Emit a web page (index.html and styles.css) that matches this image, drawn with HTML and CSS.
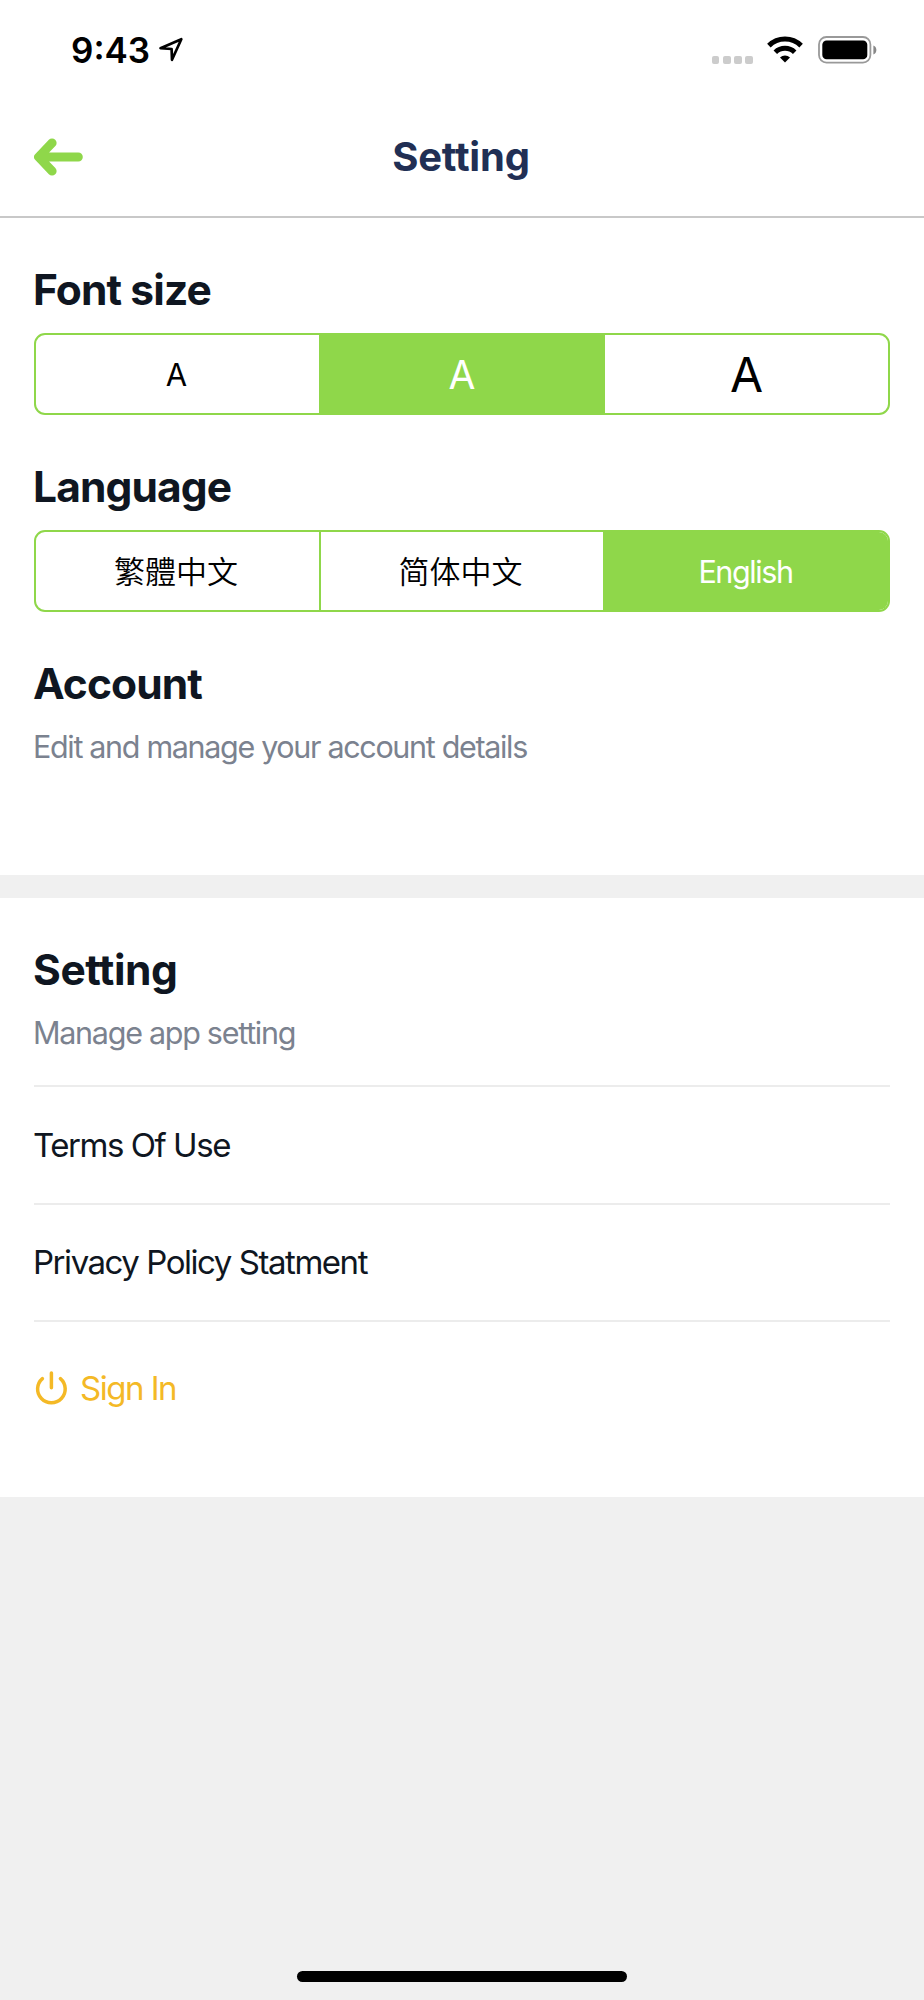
FILE: index.html
```html
<!DOCTYPE html>
<html lang="en">
<head>
<meta charset="utf-8">
<title>Setting</title>
<link rel="stylesheet" href="styles.css">
</head>
<body>
<div class="screen">
  <div class="status-bar">
    <div class="status-left">
      <span class="clock">9:43</span>
      <svg class="location" width="26" height="26" viewBox="0 0 26 26"><path d="M2.5 11.2 23.3 2.2 14 22.8 13.6 12Z" fill="none" stroke="#000" stroke-width="2.7" stroke-linejoin="round"/></svg>
    </div>
    <div class="status-right">
      <div class="cell-dots"><i></i><i></i><i></i><i></i></div>
      <svg class="wifi" width="36" height="27" viewBox="0 0 36 27">
        <path d="M1.9 9.6a23 23 0 0 1 32.2 0M8.3 16.2a14 14 0 0 1 19.4 0" fill="none" stroke="#000" stroke-width="5"/>
        <path d="M13 21.4a7.4 7.4 0 0 1 10 0L18 26.6Z" fill="#000"/>
      </svg>
      <svg class="battery" width="60" height="28" viewBox="0 0 60 28">
        <rect x="1" y="1" width="51.4" height="25.6" rx="7.5" fill="none" stroke="#999" stroke-width="1.8"/>
        <rect x="4.3" y="4.4" width="45" height="18.9" rx="4.3"/>
        <path d="M55.4 9.4c4 1.6 4 7.4 0 9Z" fill="#888"/>
      </svg>
    </div>
  </div>

  <header class="nav">
    <svg class="back" width="50" height="38" viewBox="0 0 50 38"><path d="M44.3 19H6M18.1 4.9 4.6 19 18.1 33.1" fill="none" stroke="#8fd74a" stroke-width="9" stroke-linecap="round" stroke-linejoin="round"/></svg>
    <h1 class="nav-title">Setting</h1>
  </header>

  <section class="panel panel-main">
    <h2 class="heading">Font size</h2>
    <div class="segments">
      <div class="segment size-s">A</div>
      <div class="segment size-m active">A</div>
      <div class="segment size-l">A</div>
    </div>
    <h2 class="heading">Language</h2>
    <div class="segments">
      <div class="segment cjk" lang="zh-Hant">繁體中文</div>
      <div class="segment cjk hans" lang="zh-Hans">简体中文</div>
      <div class="segment english active">English</div>
    </div>
    <h2 class="heading">Account</h2>
    <p class="sub">Edit and manage your account details</p>
  </section>

  <section class="panel panel-app">
    <h2 class="heading heading-app">Setting</h2>
    <p class="sub sub-app">Manage app setting</p>
    <div class="rows">
      <div class="row"><span>Terms Of Use</span></div>
      <div class="row"><span>Privacy Policy Statment</span></div>
      <div class="row sign-in">
        <svg class="power" width="34" height="34" viewBox="0 0 34 34"><path d="M17.4 2v14.8M8.4 7.6a13.8 13.8 0 1 0 18 0" fill="none" stroke="#f4b926" stroke-width="3.5" stroke-linecap="round"/></svg>
        <span>Sign In</span>
      </div>
    </div>
  </section>
  <div class="home-indicator"></div>
</div>
</body>
</html>
```
FILE: styles.css
```css
* { box-sizing: border-box; }
body { margin: 0; background: #f0f0f0; font-family: Inter, "Noto Sans CJK TC", sans-serif; color: #0f1621; }
h1, h2, p { margin: 0; }
.screen { width: 924px; height: 2000px; display: flex; flex-direction: column; background: #f0f0f0; }
.status-bar { height: 97px; padding: 0 46px 0 71px; display: flex; justify-content: space-between; background: #fff; }
.status-left { display: flex; padding-top: 30px; }
.clock { font-size: 35px; line-height: 41px; font-weight: 600; color: #000; }
.location { margin: 7px 0 0 8px; }
.status-right { display: flex; align-items: flex-start; padding-top: 36px; }
.cell-dots { display: flex; gap: 3.5px; padding-top: 20px; margin-right: 14px; }
.cell-dots i { width: 7.7px; height: 7.5px; border-radius: 2px; background: #ccc; }
.wifi { margin-right: 15px; }
.nav { height: 121px; padding: 0 34px; display: grid; grid-template-columns: 60px 1fr 60px; align-items: center; background: #fff; border-bottom: 2px solid #c8c8c8; }
.nav-title { padding-right: 2px; font-size: 40px; line-height: 50px; font-weight: 700; letter-spacing: -0.2px; text-align: center; color: #212f54; }
.panel { background: #fff; padding: 47px 34px 0; }
.panel-main { height: 657px; margin-bottom: 23px; }
.panel-app { height: 599px; }
.heading { margin-left: -1px; font-size: 42.5px; line-height: 50px; font-weight: 700; letter-spacing: -0.9px; }
.heading-app { letter-spacing: -0.45px; }
.segments { display: grid; grid-template-columns: 283px 284px 1fr; height: 82px; margin: 18px 0 47px; border: 2px solid #8fd74a; border-radius: 11px; overflow: hidden; }
.segment { display: flex; align-items: center; justify-content: center; font-size: 30.5px; color: #000; border-left: 2px solid #8fd74a; }
.segment:first-child { border-left: 0; padding-right: 2px; }
.segment.active { background: #8fd74a; color: #fff; }
.size-s { font-size: 31px; }
.size-m { font-size: 39px; }
.size-l { font-size: 48px; }
.english { padding-right: 2px; letter-spacing: -1.4px; }
.segment.cjk { padding: 0 3px 3px 0; font-family: "Noto Sans CJK TC", sans-serif; font-size: 31px; font-weight: 350; }
.segment.hans { font-family: "Noto Sans CJK SC", sans-serif; }
.sub { margin: 18px 0 0 -1px; font-size: 30.5px; line-height: 40px; letter-spacing: -1.33px; color: #7b828f; }
.sub-app { letter-spacing: -1.28px; }
.rows { margin-top: 32px; }
.row { height: 117.5px; display: flex; align-items: center; border-top: 2px solid #ececec; font-size: 33px; letter-spacing: -1.46px; }
.row span { margin-left: -1px; }
.sign-in { height: auto; padding-top: 46px; line-height: 40px; gap: 13px; letter-spacing: -1.5px; color: #f4b926; }
.home-indicator { width: 330px; height: 11px; margin: auto auto 18px; border-radius: 6px; background: #000; }
```
